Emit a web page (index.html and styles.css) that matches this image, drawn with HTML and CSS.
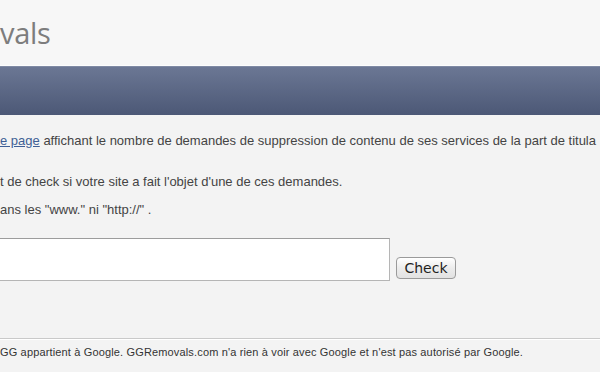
FILE: index.html
```html
<!DOCTYPE html>
<html lang="fr">
<head>
    <meta charset="UTF-8">
    <meta name="viewport" content="width=device-width, initial-scale=1.0">
    <title>GGRemovals</title>
    <link rel="stylesheet" href="styles.css">
</head>
<body>

    <div class="header">
        <h1 class="logo">vals</h1>
    </div>
    <div class="bar"></div>

    <div class="content">
        <p class="intro"><a href="#">e page</a> affichant le nombre de demandes de suppression de contenu de ses services de la part de titula</p>
        <p>t de check si votre site a fait l'objet d'une de ces demandes.</p>
        <p class="hint">ans les "www." ni "http://" .</p>

        <form class="check-form" onsubmit="return false">
            <input type="text" class="site-input">
            <button type="submit" class="check-btn">Check</button>
        </form>
    </div>

    <div class="footer">
        <p>GG appartient à Google. GGRemovals.com n'a rien à voir avec Google et n'est pas autorisé par Google.</p>
    </div>

</body>
</html>
```

FILE: styles.css
```css
body {
    margin: 0;
    padding: 0;
    background-color: #f3f3f3;
    font-family: "Liberation Sans", Arial, sans-serif;
    color: #444;
    overflow: hidden;
}

.header {
    height: 65px;
    background-color: #f7f7f7;
    border-bottom: 1px solid #fdfdfd;
}

.logo {
    margin: 0;
    padding-top: 15px;
    font-family: "Open Sans", sans-serif;
    font-weight: normal;
    font-size: 29px;
    line-height: 36px;
    color: #7d7d7d;
    letter-spacing: -0.3px;
}

.bar {
    height: 49px;
    background: linear-gradient(to bottom, #6b7794, #4c5876);
    border-top: 1px solid #7f8aa4;
    box-sizing: border-box;
}

.content {
    padding-top: 18px;
    font-size: 13px;
    line-height: 16px;
}

.content p {
    margin: 0;
    white-space: nowrap;
}

.content .intro {
    margin-bottom: 25px;
}

.content .hint {
    margin-top: 12px;
}

.content a {
    color: #3f5f95;
}

.check-form {
    display: flex;
    align-items: flex-end;
    gap: 6px;
    margin-top: 20px;
}

.site-input {
    box-sizing: border-box;
    width: 392px;
    height: 43px;
    margin: 0 0 0 -2px;
    background: #fff;
    border: 1px solid #b5b5b5;
    border-top-color: #9c9c9c;
}

.check-btn {
    box-sizing: border-box;
    width: 60px;
    height: 22px;
    margin-bottom: 2px;
    padding: 0;
    font-family: "DejaVu Sans", sans-serif;
    font-size: 14px;
    color: #1e1e1e;
    background: linear-gradient(to bottom, #ffffff, #ececec 50%, #e2e2e2);
    border: 1px solid #9a9a9a;
    border-radius: 4px;
}

.footer {
    margin-top: 57px;
    border-top: 1px solid #c9c9c9;
    box-shadow: inset 0 1px 0 #fff;
}

.footer p {
    margin: 0;
    padding-top: 7px;
    font-size: 11px;
    line-height: 12px;
    letter-spacing: 0.15px;
    color: #333;
    white-space: nowrap;
}
```
